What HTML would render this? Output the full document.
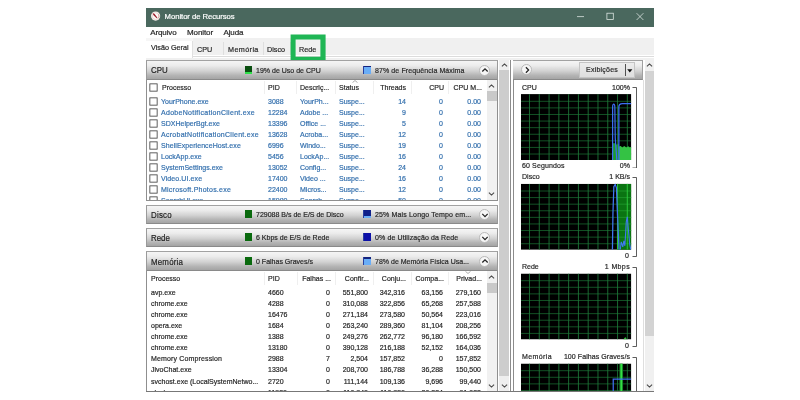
<!DOCTYPE html>
<html><head><meta charset="utf-8"><title>Monitor de Recursos</title>
<style>
*{box-sizing:border-box;margin:0;padding:0}
html,body{width:800px;height:400px;background:#fff;overflow:hidden}
body{font-family:"Liberation Sans",sans-serif;font-size:7.8px;color:#262626;position:relative}
.a{position:absolute;white-space:nowrap}
.t{position:absolute;white-space:nowrap;line-height:10px;height:10px;transform:scaleX(.9);transform-origin:0 50%;-webkit-text-stroke:0.2px currentColor}
.r{text-align:right;transform-origin:100% 50%}
.ns{transform:none}
.tb{transform:scaleX(.925)}
.title{left:146px;top:8px;width:508px;height:19px;background:#4a685e}
.hdr{left:146px;width:352px;height:19px;border-top:1px solid #a2a2a2;border-bottom:1px solid #8a8a8a;border-left:1px solid #9a9a9a;border-right:1px solid #9a9a9a;background:linear-gradient(#f5f5f5 0%,#ececec 25%,#d2d2d2 55%,#b4b4b4 80%,#a4a4a4 100%)}
.ht{font-size:9.2px;color:#1e1e1e;line-height:12px;height:12px;transform:scaleX(.86)}
.sq{width:7.5px;height:8px}
.circ{width:11px;height:11px;border-radius:50%;background:#f6f6f6;border:0.6px solid #b9b9b9}
.blue{color:#336fad}
.cb{width:9px;height:9px}
.vs{width:1px;background:#efefef}
.graph{left:521px;width:110px;height:66px;background:#000;overflow:hidden}
</style></head>
<body><div id="w" style="position:absolute;left:0;top:0;width:800px;height:400px;will-change:transform">
<div class="a title"></div>
<svg class="a" style="left:150px;top:11px" width="12" height="11" viewBox="150 11 12 11"><circle cx="155.6" cy="16.1" r="4.6" fill="#f6efec"/><circle cx="155.6" cy="16.1" r="3.3" fill="#fdfaf8" stroke="#e3c9c4" stroke-width="0.6"/><path d="M158.4 14.2 A3.3 3.3 0 0 1 157.9 18.4" fill="none" stroke="#c98f8a" stroke-width="0.7"/><path d="M152.6 12.9 L154.6 14 L157.3 17.6 L156.7 18.2 L153.3 14.9 Z" fill="#981d2b"/></svg>
<div class="t ns" style="left:164.6px;top:12px;font-size:7.7px;letter-spacing:-0.05px;color:#fff">Monitor de Recursos</div>
<svg class="a" style="left:570px;top:8px" width="84" height="19" viewBox="0 0 84 19" fill="none" stroke="#e3ebe8" stroke-width="0.75"><path d="M7 8.6 H14"/><rect x="36.9" y="5.2" width="6.4" height="6.4"/><path d="M66.6 5.2 L73.4 12 M73.4 5.2 L66.6 12"/></svg>
<div class="t" style="left:150.2px;top:28.3px;font-size:8px;letter-spacing:-0.1px;transform:none">Arquivo</div>
<div class="t" style="left:187px;top:28.3px;font-size:8px;letter-spacing:-0.1px;transform:none">Monitor</div>
<div class="t" style="left:223.4px;top:28.3px;font-size:8px;letter-spacing:-0.1px;transform:none">Ajuda</div>
<div class="a" style="left:146px;top:38px;width:508px;height:17px;background:#f0f0f0"></div>
<div class="a" style="left:146px;top:55.5px;width:508px;height:0.7px;background:#dcdcdc"></div>
<div class="a" style="left:146px;top:58px;width:508px;height:2px;background:#f0f0f0"></div>
<div class="a" style="left:146px;top:38px;width:47px;height:2.5px;background:#f6f6f6"></div><div class="a" style="left:146px;top:40.5px;width:47px;height:17.5px;background:#fff;border-right:1px solid #e0e0e0"></div>
<div class="a" style="left:223px;top:42px;width:1px;height:13px;background:#dedede"></div>
<div class="a" style="left:263px;top:42px;width:1px;height:13px;background:#dedede"></div>
<div class="a" style="left:290px;top:42px;width:1px;height:13px;background:#dedede"></div>
<div class="t" style="left:151.4px;top:43px;transform:scaleX(.925)">Visão Geral</div>
<div class="t" style="left:197px;top:44.5px;transform:scaleX(.925)">CPU</div>
<div class="t" style="left:228px;top:44.5px;transform:scaleX(.925);letter-spacing:0.42px">Memória</div>
<div class="t" style="left:267px;top:44.5px;transform:scaleX(.925)">Disco</div>
<div class="t" style="left:298.5px;top:44.5px;transform:scaleX(.925)">Rede</div>
<svg class="a" style="left:288px;top:32px" width="40" height="32" viewBox="288 32 40 32"><path fill-rule="evenodd" fill="#1fb655" d="M290.6 34.6 H325.6 V60.9 H290.6 Z M295.6 39.6 V56.8 H320.4 V39.6 Z"/></svg>
<div class="a hdr" style="top:60px;height:20px"></div>
<div class="t ht" style="left:150.8px;top:64px;letter-spacing:0px">CPU</div>
<div class="a sq" style="left:244.7px;top:66px;background:linear-gradient(#0a4f10 0,#0a4f10 78%,#2fe04a 78%)"></div>
<div class="t" style="left:256.2px;top:66px">19% de Uso de CPU</div>
<div class="a sq" style="left:363.1px;top:66px;background:linear-gradient(#14237e 0,#14237e 18%,#6aaef7 18%);border-left:0.8px solid #2a3f9e"></div>
<div class="t" style="left:374.7px;top:66px;letter-spacing:0.1px">87% de Frequência Máxima</div>
<div class="a circ" style="left:479px;top:64.6px"></div>
<svg class="a" style="left:480.5px;top:66px" width="8" height="8" viewBox="0 0 8 8"><path d="M1.3 5.5 L4 2.8 L6.7 5.5" fill="none" stroke="#222" stroke-width="1.25"/></svg>
<div class="a hdr" style="top:205px;height:19px"></div>
<div class="t ht" style="left:150.8px;top:209px;letter-spacing:0.25px">Disco</div>
<div class="a sq" style="left:244.7px;top:210px;background:#0a6a0e"></div>
<div class="t" style="left:256.2px;top:210px">729088 B/s de E/S de Disco</div>
<div class="a sq" style="left:363.1px;top:210px;background:linear-gradient(#10208a 0,#10208a 70%,#6aaef7 70%);border-left:0.8px solid #2a3f9e"></div>
<div class="t" style="left:374.7px;top:210px;letter-spacing:0.16px">25% Mais Longo Tempo em...</div>
<div class="a circ" style="left:479px;top:209.2px"></div>
<svg class="a" style="left:480.5px;top:210.6px" width="8" height="8" viewBox="0 0 8 8"><path d="M1.3 2.9 L4 5.6 L6.7 2.9" fill="none" stroke="#222" stroke-width="1.25"/></svg>
<div class="a hdr" style="top:228px;height:19px"></div>
<div class="t ht" style="left:150.8px;top:232px;letter-spacing:0px">Rede</div>
<div class="a sq" style="left:244.7px;top:233px;background:#0a6a0e"></div>
<div class="t" style="left:256.2px;top:233px">6 Kbps de E/S de Rede</div>
<div class="a sq" style="left:363.1px;top:233px;background:#0c10a8;border-left:0.8px solid #2a3f9e"></div>
<div class="t" style="left:374.7px;top:233px;letter-spacing:0.115px">0% de Utilização da Rede</div>
<div class="a circ" style="left:479px;top:232.2px"></div>
<svg class="a" style="left:480.5px;top:233.6px" width="8" height="8" viewBox="0 0 8 8"><path d="M1.3 2.9 L4 5.6 L6.7 2.9" fill="none" stroke="#222" stroke-width="1.25"/></svg>
<div class="a hdr" style="top:251px;height:20px"></div>
<div class="t ht" style="left:150.8px;top:256px;letter-spacing:0.22px">Memória</div>
<div class="a sq" style="left:244.7px;top:257px;background:#0a6a0e"></div>
<div class="t" style="left:256.2px;top:257px">0 Falhas Graves/s</div>
<div class="a sq" style="left:363.1px;top:257px;background:linear-gradient(#14237e 0,#14237e 25%,#6aaef7 25%);border-left:0.8px solid #2a3f9e"></div>
<div class="t" style="left:374.7px;top:257px;letter-spacing:0px">78% de Memória Física Usa...</div>
<div class="a circ" style="left:479px;top:255.6px"></div>
<svg class="a" style="left:480.5px;top:257px" width="8" height="8" viewBox="0 0 8 8"><path d="M1.3 5.5 L4 2.8 L6.7 5.5" fill="none" stroke="#222" stroke-width="1.25"/></svg>
<div class="a" style="left:146px;top:80px;width:352px;height:121px;border:1px solid #8f8f8f;border-top:none;background:#fff;overflow:hidden">
<div class="a vs" style="left:117px;top:1px;height:13px"></div>
<div class="a vs" style="left:149px;top:1px;height:13px"></div>
<div class="a vs" style="left:187.5px;top:1px;height:13px"></div>
<div class="a vs" style="left:225.5px;top:1px;height:13px"></div>
<div class="a vs" style="left:263.5px;top:1px;height:13px"></div>
<div class="a vs" style="left:300.5px;top:1px;height:13px"></div>
<svg class="a cb" style="left:2px;top:3px" viewBox="0 0 9 9"><rect x="0.85" y="0.85" width="7.3" height="7.3" fill="#fff" stroke="#444" stroke-width="0.85"/></svg>
<div class="t " style="left:14.8px;top:3px">Processo</div>
<div class="t " style="left:120.7px;top:3px">PID</div>
<div class="t " style="left:153.2px;top:3px">Descriç...</div>
<div class="t " style="left:192.3px;top:3px">Status</div>
<div class="t r " style="left:199.3px;width:60px;top:3px">Threads</div>
<div class="t r " style="left:236.9px;width:60px;top:3px">CPU</div>
<div class="t r " style="left:275px;width:60px;top:3px">CPU M...</div>
<svg class="a" style="left:204.5px;top:0px" width="6" height="3" viewBox="0 0 6 3"><path d="M0.5 2.6 L3 0.5 L5.5 2.6" fill="none" stroke="#777" stroke-width="0.6"/></svg>
<svg class="a cb" style="left:2px;top:16.5px" viewBox="0 0 9 9"><rect x="0.85" y="0.85" width="7.3" height="7.3" fill="#fff" stroke="#444" stroke-width="0.85"/></svg>
<div class="t blue" style="left:14.3px;top:17px">YourPhone.exe</div>
<div class="t blue" style="left:120.7px;top:17px">3088</div>
<div class="t blue" style="left:153.2px;top:17px">YourPh...</div>
<div class="t blue" style="left:192.3px;top:17px">Suspe...</div>
<div class="t r blue" style="left:198.8px;width:60px;top:17px">14</div>
<div class="t r blue" style="left:236.2px;width:60px;top:17px">0</div>
<div class="t r blue" style="left:274.2px;width:60px;top:17px">0.00</div>
<svg class="a cb" style="left:2px;top:27.6px" viewBox="0 0 9 9"><rect x="0.85" y="0.85" width="7.3" height="7.3" fill="#fff" stroke="#444" stroke-width="0.85"/></svg>
<div class="t blue" style="left:14.3px;top:28px;letter-spacing:0.32px">AdobeNotificationClient.exe</div>
<div class="t blue" style="left:120.7px;top:28px">12284</div>
<div class="t blue" style="left:153.2px;top:28px">Adobe ...</div>
<div class="t blue" style="left:192.3px;top:28px">Suspe...</div>
<div class="t r blue" style="left:198.8px;width:60px;top:28px">9</div>
<div class="t r blue" style="left:236.2px;width:60px;top:28px">0</div>
<div class="t r blue" style="left:274.2px;width:60px;top:28px">0.00</div>
<svg class="a cb" style="left:2px;top:38.7px" viewBox="0 0 9 9"><rect x="0.85" y="0.85" width="7.3" height="7.3" fill="#fff" stroke="#444" stroke-width="0.85"/></svg>
<div class="t blue" style="left:14.3px;top:39px">SDXHelperBgt.exe</div>
<div class="t blue" style="left:120.7px;top:39px">13396</div>
<div class="t blue" style="left:153.2px;top:39px">Office ...</div>
<div class="t blue" style="left:192.3px;top:39px">Suspe...</div>
<div class="t r blue" style="left:198.8px;width:60px;top:39px">5</div>
<div class="t r blue" style="left:236.2px;width:60px;top:39px">0</div>
<div class="t r blue" style="left:274.2px;width:60px;top:39px">0.00</div>
<svg class="a cb" style="left:2px;top:49.8px" viewBox="0 0 9 9"><rect x="0.85" y="0.85" width="7.3" height="7.3" fill="#fff" stroke="#444" stroke-width="0.85"/></svg>
<div class="t blue" style="left:14.3px;top:50px;letter-spacing:0.3px">AcrobatNotificationClient.exe</div>
<div class="t blue" style="left:120.7px;top:50px">13628</div>
<div class="t blue" style="left:153.2px;top:50px">Acroba...</div>
<div class="t blue" style="left:192.3px;top:50px">Suspe...</div>
<div class="t r blue" style="left:198.8px;width:60px;top:50px">12</div>
<div class="t r blue" style="left:236.2px;width:60px;top:50px">0</div>
<div class="t r blue" style="left:274.2px;width:60px;top:50px">0.00</div>
<svg class="a cb" style="left:2px;top:60.9px" viewBox="0 0 9 9"><rect x="0.85" y="0.85" width="7.3" height="7.3" fill="#fff" stroke="#444" stroke-width="0.85"/></svg>
<div class="t blue" style="left:14.3px;top:61px;letter-spacing:0.07px">ShellExperienceHost.exe</div>
<div class="t blue" style="left:120.7px;top:61px">6996</div>
<div class="t blue" style="left:153.2px;top:61px">Windo...</div>
<div class="t blue" style="left:192.3px;top:61px">Suspe...</div>
<div class="t r blue" style="left:198.8px;width:60px;top:61px">19</div>
<div class="t r blue" style="left:236.2px;width:60px;top:61px">0</div>
<div class="t r blue" style="left:274.2px;width:60px;top:61px">0.00</div>
<svg class="a cb" style="left:2px;top:72px" viewBox="0 0 9 9"><rect x="0.85" y="0.85" width="7.3" height="7.3" fill="#fff" stroke="#444" stroke-width="0.85"/></svg>
<div class="t blue" style="left:14.3px;top:72px">LockApp.exe</div>
<div class="t blue" style="left:120.7px;top:72px">5456</div>
<div class="t blue" style="left:153.2px;top:72px">LockAp...</div>
<div class="t blue" style="left:192.3px;top:72px">Suspe...</div>
<div class="t r blue" style="left:198.8px;width:60px;top:72px">16</div>
<div class="t r blue" style="left:236.2px;width:60px;top:72px">0</div>
<div class="t r blue" style="left:274.2px;width:60px;top:72px">0.00</div>
<svg class="a cb" style="left:2px;top:83.1px" viewBox="0 0 9 9"><rect x="0.85" y="0.85" width="7.3" height="7.3" fill="#fff" stroke="#444" stroke-width="0.85"/></svg>
<div class="t blue" style="left:14.3px;top:83px">SystemSettings.exe</div>
<div class="t blue" style="left:120.7px;top:83px">13052</div>
<div class="t blue" style="left:153.2px;top:83px">Config...</div>
<div class="t blue" style="left:192.3px;top:83px">Suspe...</div>
<div class="t r blue" style="left:198.8px;width:60px;top:83px">24</div>
<div class="t r blue" style="left:236.2px;width:60px;top:83px">0</div>
<div class="t r blue" style="left:274.2px;width:60px;top:83px">0.00</div>
<svg class="a cb" style="left:2px;top:94.2px" viewBox="0 0 9 9"><rect x="0.85" y="0.85" width="7.3" height="7.3" fill="#fff" stroke="#444" stroke-width="0.85"/></svg>
<div class="t blue" style="left:14.3px;top:94px;letter-spacing:0.1px">Video.UI.exe</div>
<div class="t blue" style="left:120.7px;top:94px">17400</div>
<div class="t blue" style="left:153.2px;top:94px">Video ...</div>
<div class="t blue" style="left:192.3px;top:94px">Suspe...</div>
<div class="t r blue" style="left:198.8px;width:60px;top:94px">16</div>
<div class="t r blue" style="left:236.2px;width:60px;top:94px">0</div>
<div class="t r blue" style="left:274.2px;width:60px;top:94px">0.00</div>
<svg class="a cb" style="left:2px;top:105.3px" viewBox="0 0 9 9"><rect x="0.85" y="0.85" width="7.3" height="7.3" fill="#fff" stroke="#444" stroke-width="0.85"/></svg>
<div class="t blue" style="left:14.3px;top:105px;letter-spacing:0.25px">Microsoft.Photos.exe</div>
<div class="t blue" style="left:120.7px;top:105px">22400</div>
<div class="t blue" style="left:153.2px;top:105px">Micros...</div>
<div class="t blue" style="left:192.3px;top:105px">Suspe...</div>
<div class="t r blue" style="left:198.8px;width:60px;top:105px">12</div>
<div class="t r blue" style="left:236.2px;width:60px;top:105px">0</div>
<div class="t r blue" style="left:274.2px;width:60px;top:105px">0.00</div>
<svg class="a cb" style="left:2px;top:116.4px" viewBox="0 0 9 9"><rect x="0.85" y="0.85" width="7.3" height="7.3" fill="#fff" stroke="#444" stroke-width="0.85"/></svg>
<div class="t blue" style="left:14.3px;top:116px">SearchUI.exe</div>
<div class="t blue" style="left:120.7px;top:116px">15980</div>
<div class="t blue" style="left:153.2px;top:116px">Search...</div>
<div class="t blue" style="left:192.3px;top:116px">Suspe...</div>
<div class="t r blue" style="left:198.8px;width:60px;top:116px">50</div>
<div class="t r blue" style="left:236.2px;width:60px;top:116px">0</div>
<div class="t r blue" style="left:274.2px;width:60px;top:116px">0.00</div>
<div class="a" style="left:339.5px;top:0;width:10.5px;height:122px;background:#f1f1f1"></div>
<div class="a" style="left:339.5px;top:11.3px;width:10.5px;height:10px;background:#c9c9c9"></div>
<svg class="a" style="left:341.2px;top:3.6px" width="7" height="4" viewBox="0 0 7 4"><path d="M0.9 3.4 L3.5 0.9 L6.1 3.4" fill="none" stroke="#484848" stroke-width="1.1"/></svg>
<svg class="a" style="left:341.2px;top:111.5px" width="7" height="4" viewBox="0 0 7 4"><path d="M0.9 0.6 L3.5 3.1 L6.1 0.6" fill="none" stroke="#484848" stroke-width="1.1"/></svg>
</div>
<div class="a" style="left:146px;top:271px;width:352px;height:121px;border:1px solid #8f8f8f;border-top:none;background:#fff;overflow:hidden">
<div class="a vs" style="left:117px;top:1px;height:13px"></div>
<div class="a vs" style="left:149.5px;top:1px;height:13px"></div>
<div class="a vs" style="left:187.5px;top:1px;height:13px"></div>
<div class="a vs" style="left:225.5px;top:1px;height:13px"></div>
<div class="a vs" style="left:263.5px;top:1px;height:13px"></div>
<div class="a vs" style="left:300.5px;top:1px;height:13px"></div>
<div class="t " style="left:4px;top:3px">Processo</div>
<div class="t " style="left:120.7px;top:3px">PID</div>
<div class="t r " style="left:124.2px;width:60px;top:3px">Falhas ...</div>
<div class="t r " style="left:161.6px;width:60px;top:3px">Confir...</div>
<div class="t r " style="left:199.4px;width:60px;top:3px">Conju...</div>
<div class="t r " style="left:237.4px;width:60px;top:3px">Compa...</div>
<div class="t r " style="left:275px;width:60px;top:3px">Privad...</div>
<svg class="a" style="left:317.7px;top:0.3px" width="6" height="3" viewBox="0 0 6 3"><path d="M0.5 0.4 L3 2.5 L5.5 0.4" fill="none" stroke="#777" stroke-width="0.6"/></svg>
<div class="t " style="left:4px;top:17px">avp.exe</div>
<div class="t " style="left:120.7px;top:17px">4660</div>
<div class="t r " style="left:122.6px;width:60px;top:17px">0</div>
<div class="t r " style="left:161.2px;width:60px;top:17px">551,800</div>
<div class="t r " style="left:198.4px;width:60px;top:17px">342,316</div>
<div class="t r " style="left:236.2px;width:60px;top:17px">63,156</div>
<div class="t r " style="left:273.8px;width:60px;top:17px">279,160</div>
<div class="t " style="left:4px;top:28px">chrome.exe</div>
<div class="t " style="left:120.7px;top:28px">4288</div>
<div class="t r " style="left:122.6px;width:60px;top:28px">0</div>
<div class="t r " style="left:161.2px;width:60px;top:28px">310,088</div>
<div class="t r " style="left:198.4px;width:60px;top:28px">322,856</div>
<div class="t r " style="left:236.2px;width:60px;top:28px">65,268</div>
<div class="t r " style="left:273.8px;width:60px;top:28px">257,588</div>
<div class="t " style="left:4px;top:39px">chrome.exe</div>
<div class="t " style="left:120.7px;top:39px">16476</div>
<div class="t r " style="left:122.6px;width:60px;top:39px">0</div>
<div class="t r " style="left:161.2px;width:60px;top:39px">271,184</div>
<div class="t r " style="left:198.4px;width:60px;top:39px">273,580</div>
<div class="t r " style="left:236.2px;width:60px;top:39px">50,564</div>
<div class="t r " style="left:273.8px;width:60px;top:39px">223,016</div>
<div class="t " style="left:4px;top:50px">opera.exe</div>
<div class="t " style="left:120.7px;top:50px">1684</div>
<div class="t r " style="left:122.6px;width:60px;top:50px">0</div>
<div class="t r " style="left:161.2px;width:60px;top:50px">263,240</div>
<div class="t r " style="left:198.4px;width:60px;top:50px">289,360</div>
<div class="t r " style="left:236.2px;width:60px;top:50px">81,104</div>
<div class="t r " style="left:273.8px;width:60px;top:50px">208,256</div>
<div class="t " style="left:4px;top:61px">chrome.exe</div>
<div class="t " style="left:120.7px;top:61px">1388</div>
<div class="t r " style="left:122.6px;width:60px;top:61px">0</div>
<div class="t r " style="left:161.2px;width:60px;top:61px">249,276</div>
<div class="t r " style="left:198.4px;width:60px;top:61px">262,772</div>
<div class="t r " style="left:236.2px;width:60px;top:61px">96,180</div>
<div class="t r " style="left:273.8px;width:60px;top:61px">166,592</div>
<div class="t " style="left:4px;top:72px">chrome.exe</div>
<div class="t " style="left:120.7px;top:72px">13180</div>
<div class="t r " style="left:122.6px;width:60px;top:72px">0</div>
<div class="t r " style="left:161.2px;width:60px;top:72px">390,128</div>
<div class="t r " style="left:198.4px;width:60px;top:72px">216,188</div>
<div class="t r " style="left:236.2px;width:60px;top:72px">52,152</div>
<div class="t r " style="left:273.8px;width:60px;top:72px">164,036</div>
<div class="t " style="left:4px;top:83px;letter-spacing:0.15px">Memory Compression</div>
<div class="t " style="left:120.7px;top:83px">2988</div>
<div class="t r " style="left:122.6px;width:60px;top:83px">7</div>
<div class="t r " style="left:161.2px;width:60px;top:83px">2,504</div>
<div class="t r " style="left:198.4px;width:60px;top:83px">157,852</div>
<div class="t r " style="left:236.2px;width:60px;top:83px">0</div>
<div class="t r " style="left:273.8px;width:60px;top:83px">157,852</div>
<div class="t " style="left:4px;top:94px">JivoChat.exe</div>
<div class="t " style="left:120.7px;top:94px">13304</div>
<div class="t r " style="left:122.6px;width:60px;top:94px">0</div>
<div class="t r " style="left:161.2px;width:60px;top:94px">208,700</div>
<div class="t r " style="left:198.4px;width:60px;top:94px">186,788</div>
<div class="t r " style="left:236.2px;width:60px;top:94px">36,288</div>
<div class="t r " style="left:273.8px;width:60px;top:94px">150,500</div>
<div class="t " style="left:4px;top:106px">svchost.exe (LocalSystemNetwo...</div>
<div class="t " style="left:120.7px;top:106px">2720</div>
<div class="t r " style="left:122.6px;width:60px;top:106px">0</div>
<div class="t r " style="left:161.2px;width:60px;top:106px">111,144</div>
<div class="t r " style="left:198.4px;width:60px;top:106px">109,136</div>
<div class="t r " style="left:236.2px;width:60px;top:106px">9,696</div>
<div class="t r " style="left:273.8px;width:60px;top:106px">99,440</div>
<div class="t " style="left:4px;top:117px">slack.exe</div>
<div class="t " style="left:120.7px;top:117px">11920</div>
<div class="t r " style="left:122.6px;width:60px;top:117px">0</div>
<div class="t r " style="left:161.2px;width:60px;top:117px">110,840</div>
<div class="t r " style="left:198.4px;width:60px;top:117px">110,856</div>
<div class="t r " style="left:236.2px;width:60px;top:117px">20,224</div>
<div class="t r " style="left:273.8px;width:60px;top:117px">91,032</div>
<div class="a" style="left:339.5px;top:0;width:10.5px;height:122px;background:#f1f1f1"></div>
<div class="a" style="left:339.5px;top:11.5px;width:10.5px;height:10px;background:#c9c9c9"></div>
<svg class="a" style="left:341.2px;top:3.8px" width="7" height="4" viewBox="0 0 7 4"><path d="M0.9 3.4 L3.5 0.9 L6.1 3.4" fill="none" stroke="#484848" stroke-width="1.1"/></svg>
<svg class="a" style="left:341.2px;top:112.8px" width="7" height="4" viewBox="0 0 7 4"><path d="M0.9 0.6 L3.5 3.1 L6.1 0.6" fill="none" stroke="#484848" stroke-width="1.1"/></svg>
</div>
<div class="a" style="left:499.3px;top:60px;width:10px;height:331px;background:#eeeeee"></div>
<div class="a" style="left:499.3px;top:70px;width:10px;height:306px;background:#cdcdcd"></div>
<svg class="a" style="left:501px;top:63px" width="7" height="4" viewBox="0 0 7 4"><path d="M0.9 3.4 L3.5 0.9 L6.1 3.4" fill="none" stroke="#484848" stroke-width="1.1"/></svg>
<svg class="a" style="left:501px;top:384px" width="7" height="4" viewBox="0 0 7 4"><path d="M0.9 0.6 L3.5 3.1 L6.1 0.6" fill="none" stroke="#484848" stroke-width="1.1"/></svg>
<div class="a" style="left:509.6px;top:60px;width:0.8px;height:331px;background:#8c8c8c"></div>
<div class="a" style="left:513px;top:60px;width:0.8px;height:331px;background:#8c8c8c"></div>
<div class="a" style="left:513px;top:60px;width:130px;height:19.5px;border-top:1px solid #a2a2a2;border-bottom:1px solid #8a8a8a;border-right:1px solid #a0a0a0;background:linear-gradient(#f5f5f5 0%,#ececec 25%,#d2d2d2 55%,#b4b4b4 80%,#a4a4a4 100%)"></div>
<div class="a circ" style="left:521px;top:64.2px"></div>
<svg class="a" style="left:522.6px;top:65.8px" width="8" height="8" viewBox="0 0 8 8"><path d="M2.9 1.3 L5.6 4 L2.9 6.7" fill="none" stroke="#222" stroke-width="1.25"/></svg>
<div class="a" style="left:578.5px;top:62px;width:56px;height:16px;background:linear-gradient(#ececec,#dedede);border:0.6px solid #c4c4c4"></div>
<div class="t" style="left:585.5px;top:65.2px;font-size:7.8px;letter-spacing:0.25px">Exibições</div>
<div class="a" style="left:624.8px;top:64.4px;width:0.8px;height:11.2px;background:#505050"></div>
<svg class="a" style="left:626.6px;top:68.6px" width="6" height="4" viewBox="0 0 6 4"><path d="M0.2 0.2 H5.4 L2.8 3.4 Z" fill="#111"/></svg>
<div class="a" style="left:642.5px;top:80px;width:0.8px;height:311px;background:#dedede"></div>
<div class="a" style="left:645px;top:60px;width:8.5px;height:331px;background:#f0f0f0"></div>
<div class="a" style="left:645px;top:70.5px;width:8.5px;height:265.5px;background:#d3d3d3"></div>
<svg class="a" style="left:645.8px;top:63px" width="7" height="4" viewBox="0 0 7 4"><path d="M0.9 3.4 L3.5 0.9 L6.1 3.4" fill="none" stroke="#484848" stroke-width="1.1"/></svg>
<svg class="a" style="left:645.8px;top:384px" width="7" height="4" viewBox="0 0 7 4"><path d="M0.9 0.6 L3.5 3.1 L6.1 0.6" fill="none" stroke="#484848" stroke-width="1.1"/></svg>
<div class="t" style="left:521.8px;top:82.5px">CPU</div>
<div class="t r" style="left:549.6px;width:80px;top:82.5px">100%</div>
<svg class="a" style="left:520px;top:94px" width="113" height="68"><svg x="0.9" y="0.1" width="110.4" height="66" viewBox="0 0 110 66" preserveAspectRatio="none" overflow="hidden"><rect width="110" height="66" fill="#000"/><path d="M0 7.2 H110" stroke="#17602c" stroke-width="0.85"/><path d="M0 13.79 H110" stroke="#17602c" stroke-width="0.85"/><path d="M0 20.38 H110" stroke="#17602c" stroke-width="0.85"/><path d="M0 26.97 H110" stroke="#17602c" stroke-width="0.85"/><path d="M0 33.56 H110" stroke="#17602c" stroke-width="0.85"/><path d="M0 40.15 H110" stroke="#17602c" stroke-width="0.85"/><path d="M0 46.74 H110" stroke="#17602c" stroke-width="0.85"/><path d="M0 53.33 H110" stroke="#17602c" stroke-width="0.85"/><path d="M0 59.92 H110" stroke="#17602c" stroke-width="0.85"/><path d="M8.55 0 V66" stroke="#1f7a3a" stroke-width="0.85"/><path d="M18.3 0 V66" stroke="#1f7a3a" stroke-width="0.85"/><path d="M28.05 0 V66" stroke="#1f7a3a" stroke-width="0.85"/><path d="M37.8 0 V66" stroke="#1f7a3a" stroke-width="0.85"/><path d="M47.55 0 V66" stroke="#1f7a3a" stroke-width="0.85"/><path d="M57.3 0 V66" stroke="#1f7a3a" stroke-width="0.85"/><path d="M67.05 0 V66" stroke="#1f7a3a" stroke-width="0.85"/><path d="M76.8 0 V66" stroke="#1f7a3a" stroke-width="0.85"/><path d="M86.55 0 V66" stroke="#1f7a3a" stroke-width="0.85"/><path d="M96.3 0 V66" stroke="#1f7a3a" stroke-width="0.85"/><path d="M106.05 0 V66" stroke="#1f7a3a" stroke-width="0.85"/><path d="M91.4 66 V49.5 L93 49 L95 50.5 L97.5 50 V66 Z" fill="#1c9a2c"/><path d="M97.5 66 V52.5 L99.5 52 L101 53.3 L103 52 L105 53.5 L107 52.2 L108.5 53.4 L110 52.6 V66 Z" fill="#34c244"/><path d="M91.4 66 V13 Q91.4 10 92.5 10 Q93.5 10 93.6 13 L94 44 L95.6 66" fill="none" stroke="#3d6df2" stroke-width="1.2"/><path d="M97.6 66 V13 Q97.6 9.6 101 9.6 H110" fill="none" stroke="#3d6df2" stroke-width="1.3"/></svg></svg>
<svg class="a" style="left:632px;top:86.5px" width="6" height="81.5" viewBox="0 0 6 81.5"><path d="M0.5 0.5 H4.5 V81 H0.5" fill="none" stroke="#333" stroke-width="0.8"/></svg>
<div class="t" style="left:521.8px;top:161px;letter-spacing:0.13px">60 Segundos</div>
<div class="t r" style="left:549.6px;width:80px;top:161px">0%</div>
<div class="t" style="left:521.8px;top:172.3px">Disco</div>
<div class="t r" style="left:549.6px;width:80px;top:172.3px">1 KB/s</div>
<svg class="a" style="left:520px;top:183px" width="113" height="68"><svg x="0.9" y="0.8" width="110.4" height="66" viewBox="0 0 110 66" preserveAspectRatio="none" overflow="hidden"><rect width="110" height="66" fill="#000"/><path d="M0 7.2 H110" stroke="#17602c" stroke-width="0.85"/><path d="M0 13.79 H110" stroke="#17602c" stroke-width="0.85"/><path d="M0 20.38 H110" stroke="#17602c" stroke-width="0.85"/><path d="M0 26.97 H110" stroke="#17602c" stroke-width="0.85"/><path d="M0 33.56 H110" stroke="#17602c" stroke-width="0.85"/><path d="M0 40.15 H110" stroke="#17602c" stroke-width="0.85"/><path d="M0 46.74 H110" stroke="#17602c" stroke-width="0.85"/><path d="M0 53.33 H110" stroke="#17602c" stroke-width="0.85"/><path d="M0 59.92 H110" stroke="#17602c" stroke-width="0.85"/><path d="M8.55 0 V66" stroke="#1f7a3a" stroke-width="0.85"/><path d="M18.3 0 V66" stroke="#1f7a3a" stroke-width="0.85"/><path d="M28.05 0 V66" stroke="#1f7a3a" stroke-width="0.85"/><path d="M37.8 0 V66" stroke="#1f7a3a" stroke-width="0.85"/><path d="M47.55 0 V66" stroke="#1f7a3a" stroke-width="0.85"/><path d="M57.3 0 V66" stroke="#1f7a3a" stroke-width="0.85"/><path d="M67.05 0 V66" stroke="#1f7a3a" stroke-width="0.85"/><path d="M76.8 0 V66" stroke="#1f7a3a" stroke-width="0.85"/><path d="M86.55 0 V66" stroke="#1f7a3a" stroke-width="0.85"/><path d="M96.3 0 V66" stroke="#1f7a3a" stroke-width="0.85"/><path d="M106.05 0 V66" stroke="#1f7a3a" stroke-width="0.85"/><rect x="96" y="0" width="14" height="66" fill="#0a7412"/><path d="M96 7.2 H110" stroke="#1f9a2c" stroke-width="0.85"/><path d="M96 13.79 H110" stroke="#1f9a2c" stroke-width="0.85"/><path d="M96 20.38 H110" stroke="#1f9a2c" stroke-width="0.85"/><path d="M96 26.97 H110" stroke="#1f9a2c" stroke-width="0.85"/><path d="M96 33.56 H110" stroke="#1f9a2c" stroke-width="0.85"/><path d="M96 40.15 H110" stroke="#1f9a2c" stroke-width="0.85"/><path d="M96 46.74 H110" stroke="#1f9a2c" stroke-width="0.85"/><path d="M96 53.33 H110" stroke="#1f9a2c" stroke-width="0.85"/><path d="M96 59.92 H110" stroke="#1f9a2c" stroke-width="0.85"/><path d="M96.2 0 V66 M106 0 V66" stroke="#2fd040" stroke-width="0.9"/><path d="M91.2 66 L91.7 30 L92.6 3 L94 0.6 L95.2 4 L96.2 30 L97.8 66" fill="none" stroke="#3f78f0" stroke-width="1.25"/><path d="M99 66 L100 58 L101.5 63 L102.6 57 L103.6 62 L105 38 L106 33 L107 45 L108.5 61 L109.6 66" fill="none" stroke="#3f78f0" stroke-width="1.1"/></svg></svg>
<svg class="a" style="left:632px;top:177px" width="6" height="80" viewBox="0 0 6 80"><path d="M0.5 0.5 H4.5 V79.5 H0.5" fill="none" stroke="#333" stroke-width="0.8"/></svg>
<div class="t r" style="left:549.4px;width:80px;top:251.3px">0</div>
<div class="t" style="left:521.8px;top:262.2px">Rede</div>
<div class="t r" style="left:549.6px;width:80px;top:262.2px;letter-spacing:0.39px">1 Mbps</div>
<svg class="a" style="left:520px;top:273px" width="113" height="68"><svg x="0.9" y="0.5" width="110.4" height="66" viewBox="0 0 110 66" preserveAspectRatio="none" overflow="hidden"><rect width="110" height="66" fill="#000"/><path d="M0 7.2 H110" stroke="#17602c" stroke-width="0.85"/><path d="M0 13.79 H110" stroke="#17602c" stroke-width="0.85"/><path d="M0 20.38 H110" stroke="#17602c" stroke-width="0.85"/><path d="M0 26.97 H110" stroke="#17602c" stroke-width="0.85"/><path d="M0 33.56 H110" stroke="#17602c" stroke-width="0.85"/><path d="M0 40.15 H110" stroke="#17602c" stroke-width="0.85"/><path d="M0 46.74 H110" stroke="#17602c" stroke-width="0.85"/><path d="M0 53.33 H110" stroke="#17602c" stroke-width="0.85"/><path d="M0 59.92 H110" stroke="#17602c" stroke-width="0.85"/><path d="M8.55 0 V66" stroke="#1f7a3a" stroke-width="0.85"/><path d="M18.3 0 V66" stroke="#1f7a3a" stroke-width="0.85"/><path d="M28.05 0 V66" stroke="#1f7a3a" stroke-width="0.85"/><path d="M37.8 0 V66" stroke="#1f7a3a" stroke-width="0.85"/><path d="M47.55 0 V66" stroke="#1f7a3a" stroke-width="0.85"/><path d="M57.3 0 V66" stroke="#1f7a3a" stroke-width="0.85"/><path d="M67.05 0 V66" stroke="#1f7a3a" stroke-width="0.85"/><path d="M76.8 0 V66" stroke="#1f7a3a" stroke-width="0.85"/><path d="M86.55 0 V66" stroke="#1f7a3a" stroke-width="0.85"/><path d="M96.3 0 V66" stroke="#1f7a3a" stroke-width="0.85"/><path d="M106.05 0 V66" stroke="#1f7a3a" stroke-width="0.85"/><path d="M102 66 L104 63.5 L105 65 L106 66 Z" fill="#2fbf3a"/></svg></svg>
<svg class="a" style="left:632px;top:267px" width="6" height="80" viewBox="0 0 6 80"><path d="M0.5 0.5 H4.5 V79.5 H0.5" fill="none" stroke="#333" stroke-width="0.8"/></svg>
<div class="t r" style="left:549.4px;width:80px;top:341px">0</div>
<div class="t" style="left:521.8px;top:352.3px;letter-spacing:0.45px">Memória</div>
<div class="t r" style="left:549.8px;width:80px;top:352.3px;letter-spacing:0.08px">100 Falhas Graves/s</div>
<svg class="a" style="left:520px;top:363px" width="113" height="29.5"><svg x="0.9" y="0.5" width="110.4" height="27.5" viewBox="0 0 110 27.5" preserveAspectRatio="none" overflow="hidden"><rect width="110" height="27.5" fill="#000"/><path d="M0 7.2 H110" stroke="#17602c" stroke-width="0.85"/><path d="M0 13.79 H110" stroke="#17602c" stroke-width="0.85"/><path d="M0 20.38 H110" stroke="#17602c" stroke-width="0.85"/><path d="M0 26.97 H110" stroke="#17602c" stroke-width="0.85"/><path d="M0 33.56 H110" stroke="#17602c" stroke-width="0.85"/><path d="M0 40.15 H110" stroke="#17602c" stroke-width="0.85"/><path d="M0 46.74 H110" stroke="#17602c" stroke-width="0.85"/><path d="M0 53.33 H110" stroke="#17602c" stroke-width="0.85"/><path d="M0 59.92 H110" stroke="#17602c" stroke-width="0.85"/><path d="M8.55 0 V66" stroke="#1f7a3a" stroke-width="0.85"/><path d="M18.3 0 V66" stroke="#1f7a3a" stroke-width="0.85"/><path d="M28.05 0 V66" stroke="#1f7a3a" stroke-width="0.85"/><path d="M37.8 0 V66" stroke="#1f7a3a" stroke-width="0.85"/><path d="M47.55 0 V66" stroke="#1f7a3a" stroke-width="0.85"/><path d="M57.3 0 V66" stroke="#1f7a3a" stroke-width="0.85"/><path d="M67.05 0 V66" stroke="#1f7a3a" stroke-width="0.85"/><path d="M76.8 0 V66" stroke="#1f7a3a" stroke-width="0.85"/><path d="M86.55 0 V66" stroke="#1f7a3a" stroke-width="0.85"/><path d="M96.3 0 V66" stroke="#1f7a3a" stroke-width="0.85"/><path d="M106.05 0 V66" stroke="#1f7a3a" stroke-width="0.85"/><path d="M100 0 V28" stroke="#178a28" stroke-width="3.6"/><path d="M100 0 V28" stroke="#35e045" stroke-width="1.5"/><path d="M92 28 V15.5 H110" fill="none" stroke="#3f6ff0" stroke-width="1.25"/></svg></svg>
<svg class="a" style="left:632px;top:357px" width="6" height="35" viewBox="0 0 6 35"><path d="M0.5 0.5 H4.5 V35" fill="none" stroke="#333" stroke-width="0.8"/></svg>
<div class="a" style="left:146px;top:391px;width:508px;height:1px;background:#777"></div>
<div class="a" style="left:146px;top:392px;width:508px;height:8px;background:#fff"></div>
</div></body></html>
